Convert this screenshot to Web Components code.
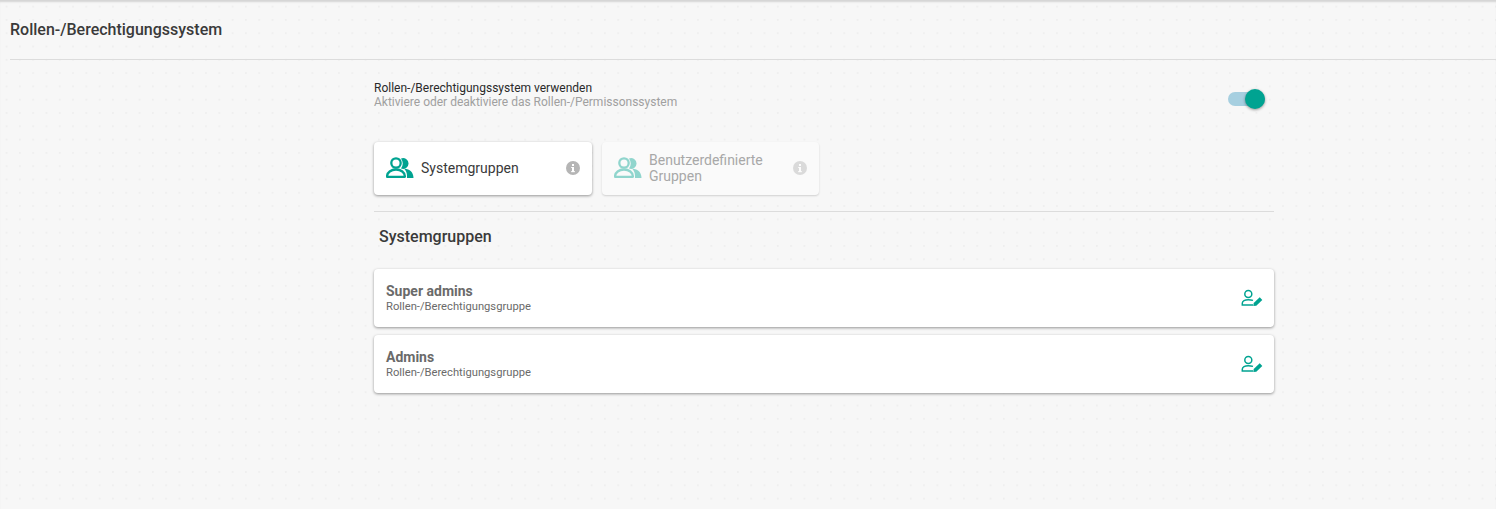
<!DOCTYPE html>
<html lang="de"><head><meta charset="utf-8"><title>Rollen</title>
<style>
html,body{margin:0;height:100%;overflow:hidden}
body{font-family:Roboto,sans-serif;color:#333;background-color:#f7f7f7;
background-image:radial-gradient(circle at 6.5px 6.5px,#eeeeee 0.6px,transparent 1.4px);background-size:13.3px 13.3px}
</style></head><body>
<template id="t-page"><style>
:host{display:block;height:509px;box-sizing:border-box;box-shadow:inset 0 3px 2px -1px #d4d4d4}
.main{display:flex;flex-direction:column;width:900px;margin-left:374px}
</style><app-header></app-header><div class="main"><slot></slot></div></template>
<template id="t-header"><style>
:host{display:flex;align-items:center;height:59px;margin-left:10px;border-bottom:1px solid #dcdcdc;box-sizing:content-box;
font:500 16px/20px Roboto,sans-serif;color:#3a3a3a}
</style><span>Rollen-/Berechtigungssystem</span></template>
<template id="t-toggle-row"><style>
:host{display:flex;justify-content:space-between;align-items:center;height:82px;font:400 12px/14px Roboto,sans-serif;padding-right:9px;box-sizing:border-box}
.t{color:#2a2a2a}.s{color:#a0a0a0}
.txt{margin-top:-12px}
.sw{position:relative;width:37px;height:14px;border-radius:7px;background:#a6cfe0;margin-top:-4px}
.th{position:absolute;right:0;top:-3px;width:20px;height:20px;border-radius:50%;background:#00a391;box-shadow:0 1px 3px rgba(0,0,0,.4)}
</style><div class="txt"><div class="t"><slot name="t"></slot></div><div class="s"><slot name="s"></slot></div></div><div class="sw"><div class="th"></div></div></template>
<template id="t-tabs"><style>
:host{display:flex;gap:10px;padding-bottom:16px;border-bottom:1px solid #dcdcdc}
</style><slot></slot></template>
<template id="t-tab"><style>
:host{display:flex;align-items:center;width:218px;height:53px;box-sizing:border-box;padding:0 12px;background:#fff;border-radius:4px;box-shadow:0 1px 3px rgba(0,0,0,.4);font:400 14px/16px Roboto,sans-serif;color:#3a3a3a}
:host([disabled]){background:#fafafa;box-shadow:0 1px 2px rgba(0,0,0,.16);color:#a8a8a8;width:217px}
:host([disabled]) svg.g{opacity:.42}
:host([disabled]) svg.i{opacity:.45}
svg.g{width:28px;height:24px;flex:none;margin:-2px 7px 0 0}
.l{flex:1;margin-top:-2px}
svg.i{width:16px;height:16px;flex:none;margin:-2px -.7px 0 0}
</style><svg class="g" viewBox="0 0 28 24"><circle cx="10" cy="7" r="4.700" fill="none" stroke="#00a391" stroke-width="2.300"/><path d="M15 2.400A5.500 5.500 0 1 1 15 12.600A9 9 0 0 0 15 2.400z" fill="#00a391"/><path d="M1.100 20.800v-.6c0-3.700 3.900-6.700 8.900-6.700s8.900 3 8.900 6.700v.6z" fill="none" stroke="#00a391" stroke-width="2.300" stroke-linejoin="round"/><path d="M18.200 12.800c5.300-.2 9.300 3.600 9.300 9.100H21v-2c0-2.700-1-5.300-2.800-7.100z" fill="#00a391"/></svg><span class="l"><slot></slot></span><svg class="i" viewBox="0 0 16 16"><circle cx="8" cy="8" r="7" fill="#b5b5b5"/><rect x="7" y="7" width="2" height="5" fill="#fff"/><rect x="7" y="4" width="2" height="2" fill="#fff"/><rect x="6.200" y="11" width="3.600" height="1.200" fill="#fff"/><rect x="6.200" y="7" width="2" height="1" fill="#fff"/></svg></template>
<template id="t-heading"><style>
:host{display:block;font:500 16px/20px Roboto,sans-serif;color:#3a3a3a;padding:15px 0 0 5px;height:42px}
</style><slot></slot></template>
<template id="t-group"><style>
:host{display:flex;align-items:center;justify-content:space-between;height:58px;box-sizing:border-box;padding:0 11px 0 12px;margin-bottom:8px;background:#fff;border-radius:4px;box-shadow:0 1px 3px rgba(0,0,0,.4)}
.n{font:700 14px/16px Roboto,sans-serif;color:#6a6a6a;margin-bottom:1px}
.d{font:400 11.2px/13px Roboto,sans-serif;color:#6a6a6a}
svg{width:22px;height:20px;flex:none}
</style><div><div class="n"><slot></slot></div><div class="d"><slot name="d"></slot></div></div><svg viewBox="0 0 22 20"><circle cx="7.300" cy="6" r="3.500" fill="none" stroke="#00a391" stroke-width="1.500"/><path d="M12 12.400c-1.300-.4-3-.7-4.700-.7c-3.500 0-6 1.600-6 3.500v1.900H12" fill="none" stroke="#00a391" stroke-width="1.500"/><path d="M12.300 18.100l.4-3l6-5.800l2.600 2.600l-6 5.800z" fill="#00a391"/></svg></template>
<app-page>
<toggle-row><span slot="t">Rollen-/Berechtigungssystem verwenden</span><span slot="s">Aktiviere oder deaktiviere das Rollen-/Permissonssystem</span></toggle-row>
<tab-bar><group-tab>Systemgruppen</group-tab><group-tab disabled>Benutzerdefinierte Gruppen</group-tab></tab-bar>
<section-heading>Systemgruppen</section-heading>
<group-row>Super admins<span slot="d">Rollen-/Berechtigungsgruppe</span></group-row>
<group-row>Admins<span slot="d">Rollen-/Berechtigungsgruppe</span></group-row>
</app-page>
<script>
const defs={'app-page':'t-page','app-header':'t-header','toggle-row':'t-toggle-row','tab-bar':'t-tabs','group-tab':'t-tab','section-heading':'t-heading','group-row':'t-group'};
for(const [n,t] of Object.entries(defs)){customElements.define(n,class extends HTMLElement{constructor(){super();this.attachShadow({mode:'open'}).append(document.getElementById(t).content.cloneNode(true));}});}
</script>
</body></html>
